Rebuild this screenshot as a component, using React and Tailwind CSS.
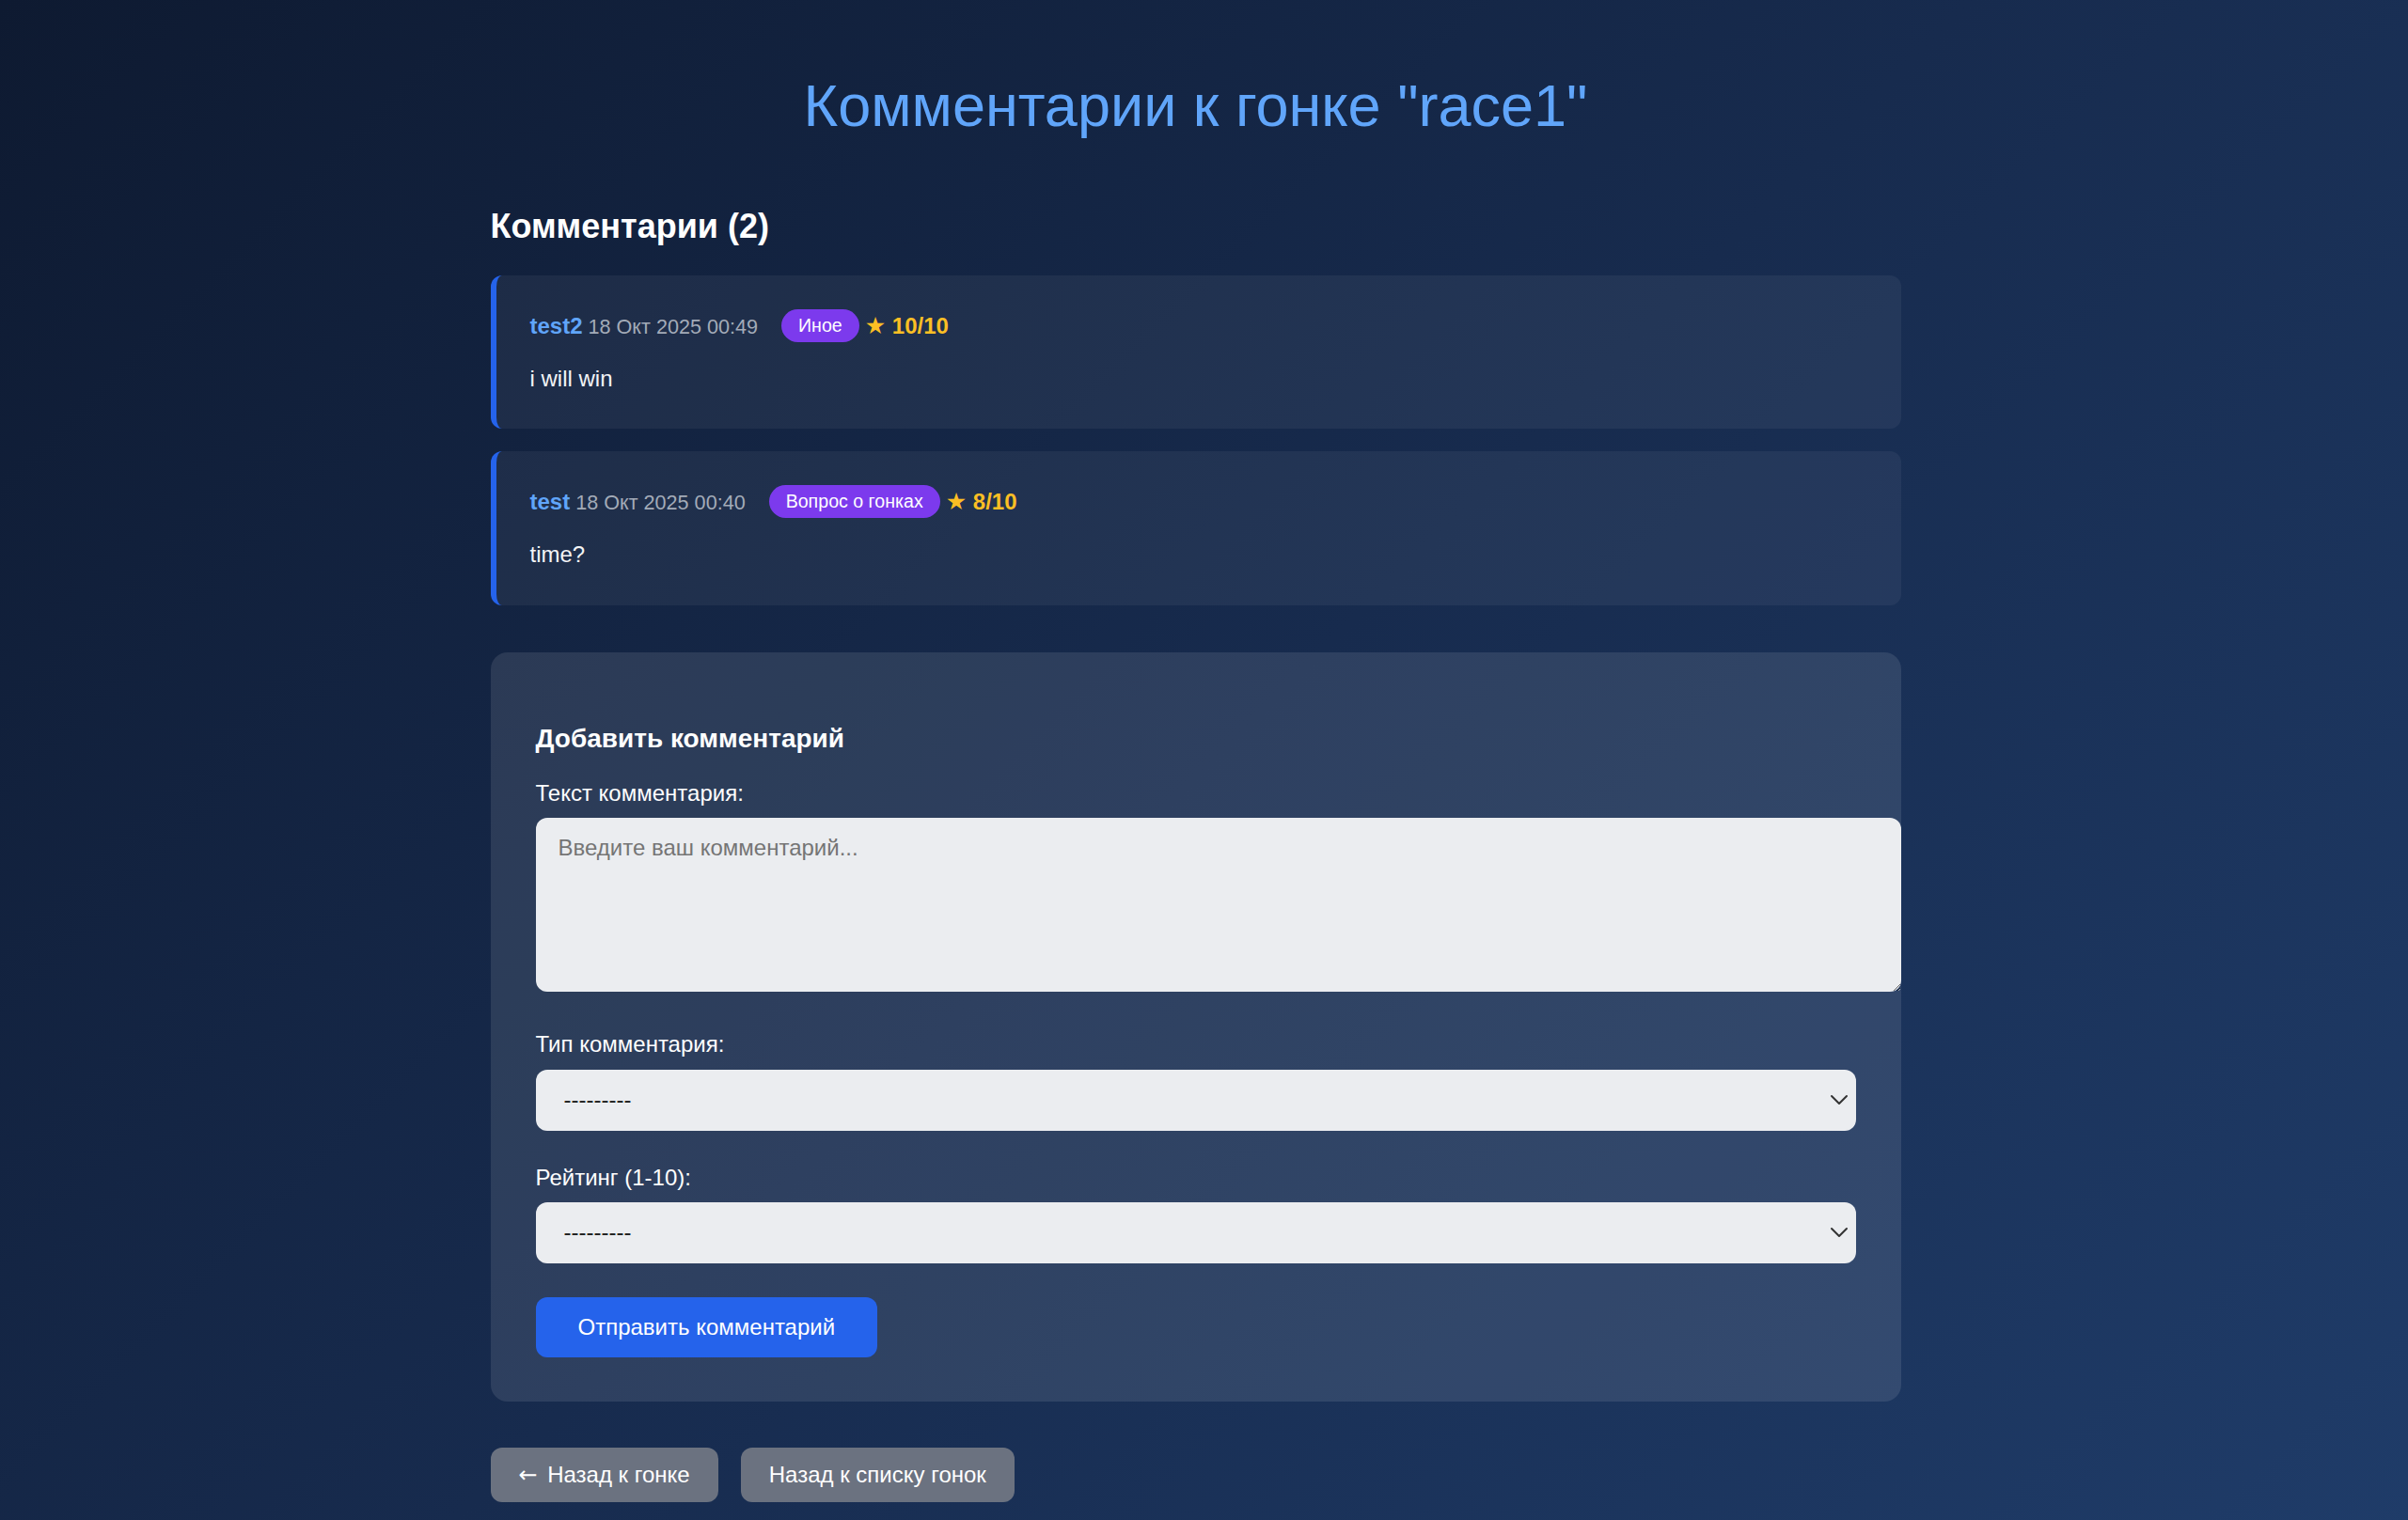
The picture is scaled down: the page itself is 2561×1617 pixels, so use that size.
import React from 'react';

const comments = [
  { user: 'test2', date: '18 Окт 2025 00:49', type: 'Иное', rating: '10/10', text: 'i will win' },
  { user: 'test', date: '18 Окт 2025 00:40', type: 'Вопрос о гонках', rating: '8/10', text: 'time?' },
];

const Chevron = () => (
  <svg className="pointer-events-none absolute right-[8px] top-1/2 -translate-y-1/2" width="20" height="12" viewBox="0 0 20 12" fill="none">
    <path d="M2 2l8 8 8-8" stroke="#333" strokeWidth="2" strokeLinecap="round" strokeLinejoin="round" />
  </svg>
);

const CommentCard = ({ c }) => (
  <div className="bg-white/[0.05] border-l-[6px] border-[#2563eb] rounded-[12px] pl-[36px] pr-[36px] pt-[36px] pb-[34px] mb-[24px]">
    <div className="flex items-center mb-[20px] h-[35px]">
      <span className="whitespace-nowrap">
        <span className="text-[24px] font-bold text-[#60a5fa]">{c.user}</span>
        <span className="text-[21.6px] text-[#a3abb8]"> {c.date}</span>
      </span>
      <span className="ml-[25px] bg-[#7c3aed] text-white text-[19.6px] leading-[23px] px-[18px] py-[6px] rounded-full">{c.type}</span>
      <span className="ml-[6px] text-[#fbbf24] text-[24px] font-bold whitespace-nowrap">
        <span className="text-[25px] font-normal" style={{ fontFamily: '"DejaVu Sans", sans-serif' }}>★</span> {c.rating}
      </span>
    </div>
    <p className="text-[24px] leading-[38.4px] text-[#f3f4f6]">{c.text}</p>
  </div>
);

export default function App() {
  return (
    <div
      className="min-h-screen bg-[linear-gradient(135deg,#0e1a31_0%,#172b4e_50%,#1f3c69_100%)] pr-[18px] text-white"
      style={{ fontFamily: '"Liberation Sans", Arial, sans-serif' }}
    >
      <div className="w-[1500px] mx-auto pt-[77px] pb-[40px]">
        <h1 className="text-[63px] leading-[70px] text-center text-[#60a5fa] font-normal">
          Комментарии к гонке "race1"
        </h1>

        <h2 className="mt-[73px] mb-[31px] text-[36px] leading-[42px] font-bold text-white">Комментарии (2)</h2>

        {comments.map((c) => (
          <CommentCard key={c.user} c={c} />
        ))}

        <div className="mt-[50px] bg-white/[0.1] rounded-[18px] px-[48px] pt-[48px] pb-[47px]">
          <h3 className="mt-[28px] mb-[28px] text-[28px] leading-[32px] font-bold text-white">Добавить комментарий</h3>

          <label className="block text-[24px] leading-[28px] mb-[12px] text-white">Текст комментария:</label>
          <textarea
            rows={4}
            placeholder="Введите ваш комментарий..."
            className="block w-[calc(100%+48px)] h-[185px] bg-[#ebedf0] rounded-[12px] px-[24px] pt-[18px] text-[24px] leading-[28px] text-[#222] placeholder:text-[#757575] outline-none mb-[42px] resize-y"
          />

          <label className="block text-[24px] leading-[28px] mb-[13px] text-white">Тип комментария:</label>
          <div className="relative mb-[36px]">
            <select className="appearance-none block w-full h-[65px] bg-[#ebedf0] rounded-[12px] pl-[30px] text-[24px] text-[#222] outline-none">
              <option>---------</option>
            </select>
            <Chevron />
          </div>

          <label className="block text-[24px] leading-[28px] mb-[12px] text-white">Рейтинг (1-10):</label>
          <div className="relative mb-[36px]">
            <select className="appearance-none block w-full h-[65px] bg-[#ebedf0] rounded-[12px] pl-[30px] text-[24px] text-[#222] outline-none">
              <option>---------</option>
            </select>
            <Chevron />
          </div>

          <button className="bg-[#2563eb] text-white text-[24px] leading-[28px] px-[45px] py-[18px] rounded-[12px]">
            Отправить комментарий
          </button>
        </div>

        <div className="mt-[49px] flex gap-[24px]">
          <button className="bg-[#6b7280] text-white text-[24px] leading-[28px] px-[30px] py-[15px] rounded-[12px]">
            <span className="inline-block w-[24px] text-left" style={{ fontFamily: '"DejaVu Sans", sans-serif' }}>←</span> Назад к гонке
          </button>
          <button className="bg-[#6b7280] text-white text-[24px] leading-[28px] px-[30px] py-[15px] rounded-[12px]">Назад к списку гонок</button>
        </div>
      </div>
    </div>
  );
}
